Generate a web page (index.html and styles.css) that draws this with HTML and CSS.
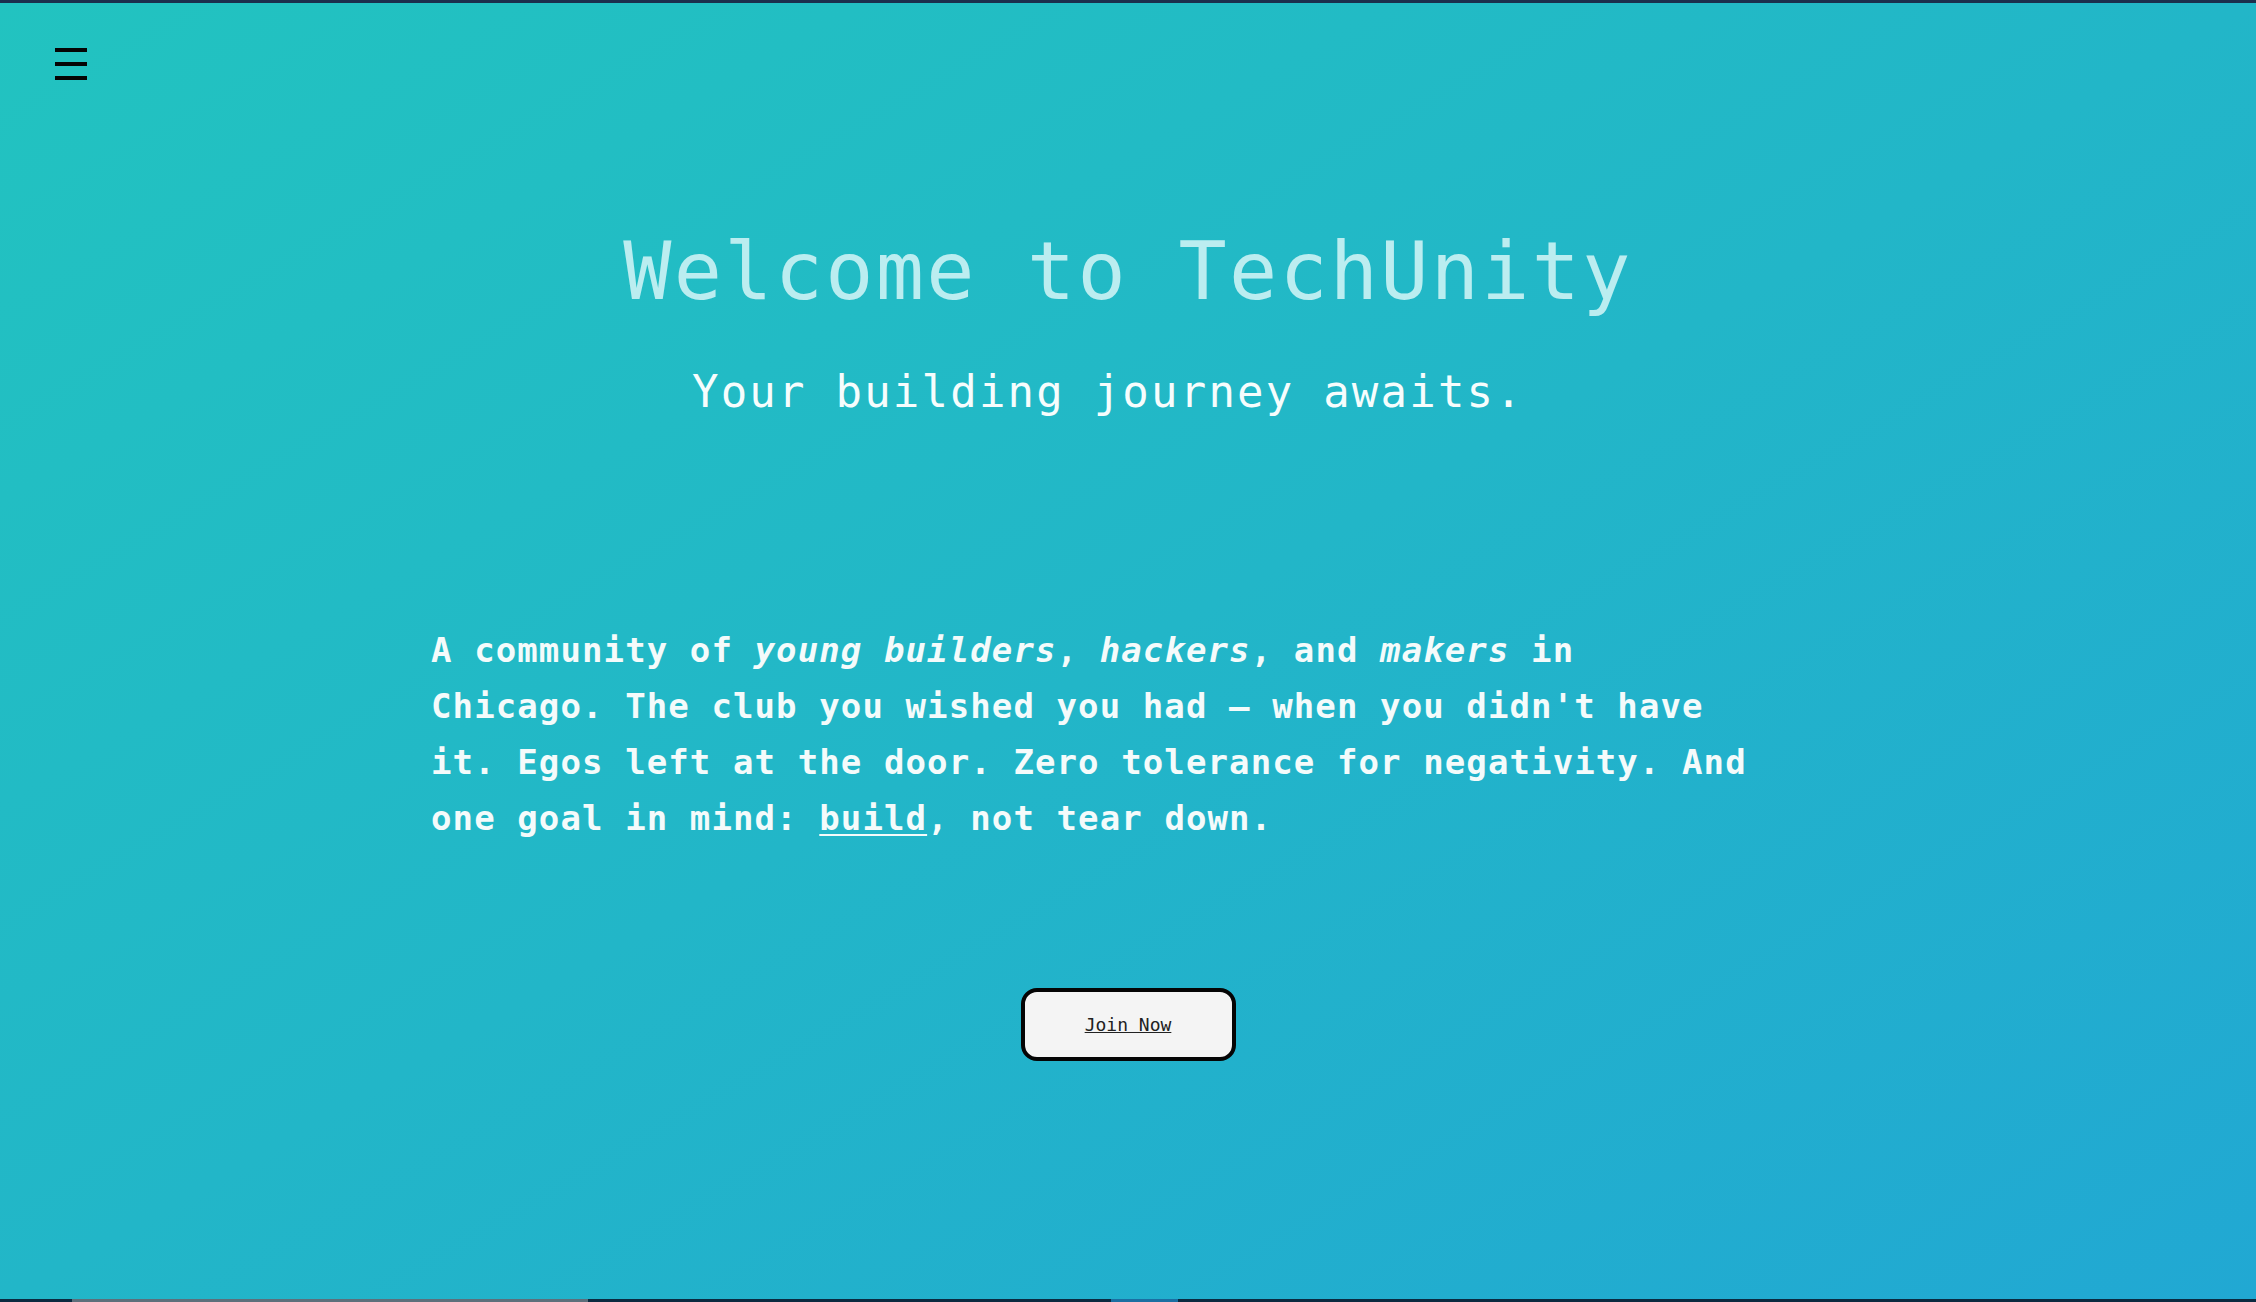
FILE: index.html
```html
<!DOCTYPE html>
<html lang="en">
<head>
<meta charset="utf-8">
<title>TechUnity</title>
<link rel="stylesheet" href="styles.css">
</head>
<body>
<header class="topbar">
  <button class="menu" aria-label="Menu">
    <span class="bar"></span><span class="bar"></span><span class="bar"></span>
  </button>
</header>
<main class="hero">
  <h1 class="title">Welcome to TechUnity</h1>
  <h2 class="subtitle">Your building journey awaits.</h2>
  <p class="intro">A community of <em>young builders</em>, <em>hackers</em>, and <em>makers</em> in Chicago. The club you wished you had – when you didn't have it. Egos left at the door. Zero tolerance for negativity. And one goal in mind: <u>build</u>, not tear down.</p>
  <a class="join" href="#">Join Now</a>
</main>
<div class="strip">
  <span class="seg dark s1"></span>
  <span class="seg grey s2"></span>
  <span class="seg dark s3"></span>
  <span class="seg blue s4"></span>
  <span class="seg dark s5"></span>
</div>
</body>
</html>
```

FILE: styles.css
```css
html, body {
  margin: 0;
  padding: 0;
}
body {
  min-height: 100vh;
  box-sizing: border-box;
  display: flex;
  flex-direction: column;
  border-top: 3px solid #1b2f4d;
  background: linear-gradient(to bottom right, #22c3c0 0%, #22b6c8 50%, #21a8d3 100%);
  font-family: "DejaVu Sans Mono", "Liberation Mono", monospace;
}
.topbar {
  padding: 45px 0 0 55px;
  height: 32px;
}
.menu {
  display: flex;
  flex-direction: column;
  justify-content: space-between;
  width: 32px;
  height: 32px;
  padding: 0;
  border: 0;
  background: transparent;
}
.bar {
  display: block;
  width: 32px;
  height: 4px;
  background: #050505;
}
.hero {
  flex: 1;
  display: flex;
  flex-direction: column;
  align-items: center;
  padding-top: 152px;
}
.title {
  margin: 0;
  font-size: 80px;
  line-height: 1;
  font-weight: 400;
  letter-spacing: 2.3px;
  color: #bbedf0;
}
.subtitle {
  margin: 58px 0 0;
  padding-right: 40px;
  font-size: 44px;
  line-height: 1;
  font-weight: 400;
  letter-spacing: 2.2px;
  color: #f6fdfd;
}
.intro {
  margin: 208px 0 0;
  width: 1394px;
  box-sizing: border-box;
  padding-right: 60px;
  font-size: 34px;
  line-height: 56px;
  font-weight: 700;
  letter-spacing: 1.1px;
  color: #f4fbfb;
}
.intro em {
  font-style: italic;
}
.intro u {
  text-decoration-thickness: 2px;
  text-underline-offset: 4px;
}
.join {
  margin-top: 142px;
  width: 215px;
  height: 73px;
  box-sizing: border-box;
  display: flex;
  align-items: center;
  justify-content: center;
  border: 4px solid #050505;
  border-radius: 16px;
  background: #f4f4f4;
  color: #222;
  font-size: 18px;
  text-decoration: underline;
}
.strip {
  display: flex;
  height: 3px;
}
.seg {
  display: block;
  height: 3px;
}
.dark { background: #0b2a40; }
.grey { background: #5d6f7b; }
.blue { background: #1b6fa2; }
.s1 { width: 72px; }
.s2 { width: 516px; }
.s3 { width: 523px; }
.s4 { width: 67px; }
.s5 { flex: 1; }
```
